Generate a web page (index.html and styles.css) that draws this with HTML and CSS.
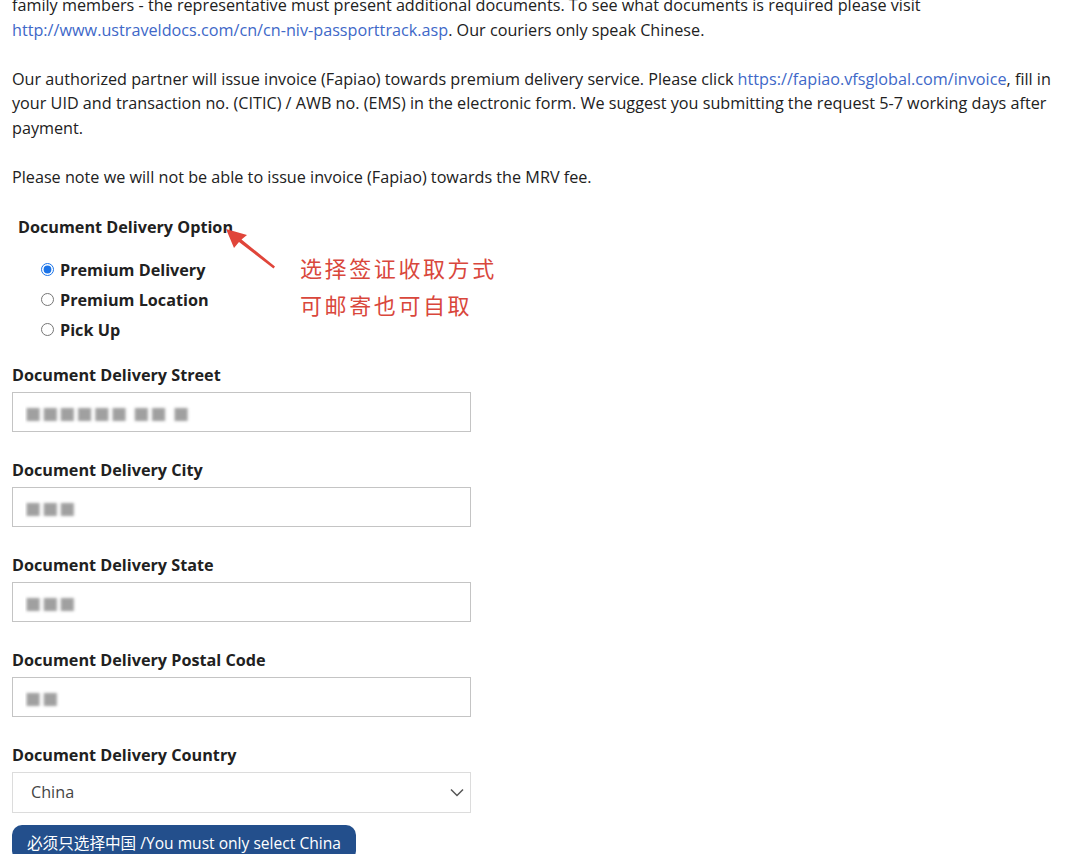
FILE: index.html
```html
<!DOCTYPE html>
<html lang="en">
<head>
  <meta charset="UTF-8" />
  <meta name="viewport" content="width=device-width, initial-scale=1.0">
  <title>Document Delivery</title>
  <link rel="stylesheet" href="styles.css">
</head>
<body>
  <div class="page">
    <p class="notice first">family members - the representative must present additional documents. To see what documents is required please visit <a href="#">http://www.ustraveldocs.com/cn/cn-niv-passporttrack.asp</a>. Our couriers only speak Chinese.</p>
    <p class="notice">Our authorized partner will issue invoice (Fapiao) towards premium delivery service. Please click <a href="#">https://fapiao.vfsglobal.com/invoice</a>, fill in your UID and transaction no. (CITIC) / AWB no. (EMS) in the electronic form. We suggest you submitting the request 5-7 working days after payment.</p>
    <p class="notice">Please note we will not be able to issue invoice (Fapiao) towards the MRV fee.</p>

    <form class="delivery">
      <div class="option-group">
        <div class="option-title">Document Delivery Option</div>
        <label class="radio"><input type="radio" name="opt" checked> Premium Delivery</label>
        <label class="radio"><input type="radio" name="opt"> Premium Location</label>
        <label class="radio"><input type="radio" name="opt"> Pick Up</label>

        <svg class="arrow" width="56" height="46" viewBox="0 0 56 46">
          <path d="M2 2 L23 8 L17.5 12.5 L51 39.5 L49.5 41.5 L15 15 L10 21 Z" fill="#e0453a"/>
        </svg>
        <div class="note">选择签证收取方式<br>可邮寄也可自取</div>
      </div>

      <div class="field">
        <label>Document Delivery Street</label>
        <input type="text" class="blurred" value="■■■■■■ ■■ ■">
      </div>
      <div class="field">
        <label>Document Delivery City</label>
        <input type="text" class="blurred" value="■■■">
      </div>
      <div class="field">
        <label>Document Delivery State</label>
        <input type="text" class="blurred" value="■■■">
      </div>
      <div class="field">
        <label>Document Delivery Postal Code</label>
        <input type="text" class="blurred" value="■■">
      </div>
      <div class="field last">
        <label>Document Delivery Country</label>
        <div class="select">
          <span>China</span>
          <svg width="14" height="9" viewBox="0 0 14 9"><path d="M1 1.5 L7 7.5 L13 1.5" fill="none" stroke="#555" stroke-width="1.5"/></svg>
        </div>
      </div>
      <button type="button" class="china-btn">必须只选择中国 /You must only select China</button>
    </form>
  </div>
</body>
</html>
```

FILE: styles.css
```css
body { margin: 0; background: #fff; color: #212121; font-family: "Open Sans", "Noto Sans CJK SC", sans-serif; font-size: 16.2px; }
.page { padding: 0 8px 0 12px; }
a { color: #4068c8; text-decoration: none; }
.notice { margin: 0 0 24.5px; line-height: 24.5px; }
.notice.first { margin-top: -7px; }

.option-group { position: relative; padding: 1px 0 15px 6px; }
.option-title { font-weight: bold; line-height: 24px; margin-bottom: 19px; }
.radio { display: flex; align-items: center; gap: 6px; font-weight: bold; line-height: 24px; margin: 0 0 6px 23px; }
.radio input { margin: 0; width: 13px; height: 13px; accent-color: #1a73e8; }

.arrow { position: absolute; left: 212px; top: 13px; }
.note { position: absolute; left: 288px; top: 36px; width: 260px; color: #d9473c; font-size: 22px; letter-spacing: 2.6px; line-height: 37px; font-weight: normal; }

.field { margin-bottom: 26px; }
.field label { display: block; font-weight: bold; line-height: 24px; margin-bottom: 5px; }
.field input { box-sizing: border-box; width: 459px; height: 40px; border: 1px solid #c4c4c4; padding: 2px 12px 0; font: inherit; outline: none; }
.blurred { color: transparent; font-size: 14px; letter-spacing: 1px; text-shadow: 0 0 3px rgba(150, 150, 150, 0.9); }
.field.last { margin-bottom: 12px; }

.select { box-sizing: border-box; width: 459px; height: 41px; border: 1px solid #dcdcdc; display: flex; align-items: center; justify-content: space-between; padding: 0 6px 0 18px; color: #444; }

.china-btn { display: block; background: #234f8c; color: #fff; border: none; border-radius: 10px; padding: 7px 15px; font: inherit; font-size: 15.6px; line-height: 22px; }
```
